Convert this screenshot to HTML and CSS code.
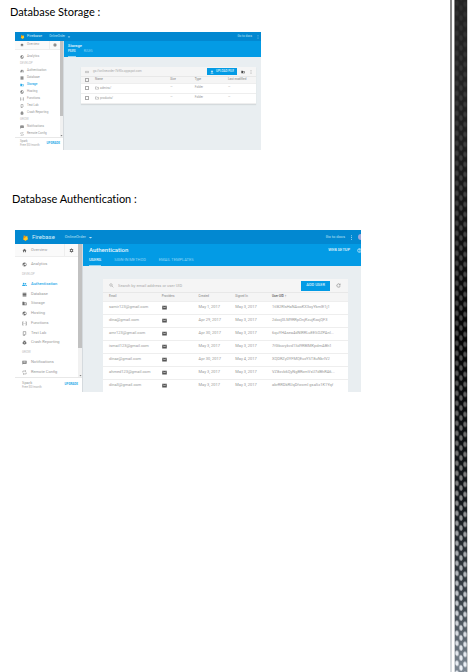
FILE: index.html
```html
<!DOCTYPE html>
<html lang="en">
<head>
<meta charset="utf-8">
<title>Database Storage and Authentication</title>
<link rel="stylesheet" href="styles.css">
</head>
<body>
<svg class="defs" aria-hidden="true">
  <symbol id="fire" viewBox="0 0 24 24"><path fill="#ffa000" d="M4 18 6.500 2.500 11 9l2-4 7 13-8 5z"/><path fill="#f57c00" d="M4 18 11 9l3 4z"/><path fill="#ffca28" d="M4 18 18 6l2 12-8 5z"/></symbol>
  <symbol id="home" viewBox="0 0 24 24"><path d="M10 20v-6h4v6h5v-8h3L12 3 2 12h3v8z"/></symbol>
  <symbol id="gear" viewBox="0 0 24 24"><path fill-rule="evenodd" d="m10 2-.5 3-2 1L5 5 3 9l2 2v2l-2 2 2 4 3-1 2 1v3h4l.5-3 2-1 2.500 1 2-4-2-2v-2l2-2-2-4-3 1-2-1V2zm2 6a4 4 0 1 1 0 8 4 4 0 0 1 0-8z"/></symbol>
  <symbol id="globe" viewBox="0 0 24 24"><path fill-rule="evenodd" d="M12 2a10 10 0 1 0 0 20 10 10 0 0 0 0-20zM4 11l5 4v4c-3-1-5-4-5-8zm13 6-2-1v-3H9v-2h3V8h3V5c4 2 6 8 2 12z"/></symbol>
  <symbol id="people" viewBox="0 0 24 24"><circle cx="8" cy="8" r="4"/><circle cx="17" cy="8" r="3.500"/><path d="M1 19v-3c0-4 14-4 14 0v3zm16 0v-3l-1-3c3 0 7 1 7 3v3z"/></symbol>
  <symbol id="data" viewBox="0 0 24 24"><path d="M3 3h18v5H3zm0 6.500h18v5H3zM3 16h18v5H3z"/></symbol>
  <symbol id="folder" viewBox="0 0 24 24"><path fill-rule="evenodd" d="M2 4h8l2 3h10v13H2zm10 7v6h7v-6z"/></symbol>
  <symbol id="folder-line" viewBox="0 0 24 24"><path fill="none" stroke="currentColor" stroke-width="3" d="M3 5h7l2 3h9v11H3z"/></symbol>
  <symbol id="code" viewBox="0 0 24 24"><path fill="none" stroke="currentColor" stroke-width="2.500" d="M7 4H3v16h4M17 4h4v16h-4"/><circle cx="8" cy="12" r="1.500"/><circle cx="12" cy="12" r="1.500"/><circle cx="16" cy="12" r="1.500"/></symbol>
  <symbol id="phone" viewBox="0 0 24 24"><path fill="none" stroke="currentColor" stroke-width="2.500" d="M6 3h12v13l-4 5H6zM9 17h5"/></symbol>
  <symbol id="bug" viewBox="0 0 24 24"><path fill-rule="evenodd" d="M8 2h2l2 3 2-3h2l-1 5h4v3h2v3h-2v3h2v3h-4l-2 3H9l-2-3H3v-3h2v-3H3v-3h2V7h4zm1 9v2h6v-2zm0 4v2h6v-2z"/></symbol>
  <symbol id="message" viewBox="0 0 24 24"><path fill-rule="evenodd" d="M2 3h20v15H7l-5 4zm4 4v2h12V7zm0 5v2h12v-2z"/></symbol>
  <symbol id="config" viewBox="0 0 24 24"><path fill="none" stroke="currentColor" stroke-width="2" d="M4 12V5h15M16 2l3 3-3 3M20 12v7H5M8 16l-3 3 3 3"/></symbol>
  <symbol id="mail" viewBox="0 0 24 24"><path fill-rule="evenodd" d="M1 3h22v18H1zm3 4v2l8 5 8-5V7l-8 5z"/></symbol>
  <symbol id="search" viewBox="0 0 24 24"><path fill="none" stroke="currentColor" stroke-width="2.500" d="m14 14 7 7"/><circle cx="9.500" cy="9.500" r="6" fill="none" stroke="currentColor" stroke-width="2.500"/></symbol>
  <symbol id="refresh" viewBox="0 0 24 24"><path fill="none" stroke="currentColor" stroke-width="2.500" d="M18 7a8 8 0 1 0 2 6M20 3v6h-6"/></symbol>
  <symbol id="more" viewBox="0 0 24 24"><circle cx="12" cy="4" r="2.500"/><circle cx="12" cy="12" r="2.500"/><circle cx="12" cy="20" r="2.500"/></symbol>
  <symbol id="link" viewBox="0 0 24 24"><path fill="none" stroke="currentColor" stroke-width="3" d="M10 8H3v8h7M14 8h7v8h-7M7 12h10"/></symbol>
  <symbol id="upload" viewBox="0 0 24 24"><path d="M9 16V10H4l8-8 8 8h-5v6zM4 19h16v3H4z"/></symbol>
  <symbol id="help" viewBox="0 0 24 24"><circle cx="12" cy="12" r="9" fill="none" stroke="currentColor" stroke-width="3"/><path fill="none" stroke="currentColor" stroke-width="3" d="M8 10c0-5 8-5 8 0 0 3-4 2-4 5m0 1v3"/></symbol>
  <symbol id="down" viewBox="0 0 24 24"><path d="M4 9h16l-8 8z"/></symbol>
</svg>

<main class="page">
  <h1 class="title">Database Storage :</h1>
  <section class="console console-small" aria-label="Storage console">
    <header class="topbar">
      <svg class="logo"><use href="#fire"/></svg><span class="brand">Firebase</span>
      <button class="project">OnlineOrder <svg><use href="#down"/></svg></button>
      <a class="docs" href="#docs">Go to docs</a>
      <button class="dots" aria-label="More"><svg><use href="#more"/></svg></button>
    </header>
    <div class="body">
      <aside class="sidebar">
        <div class="side-main">
          <div class="overview"><a href="#overview"><svg><use href="#home"/></svg>Overview</a><button aria-label="Settings"><svg><use href="#gear"/></svg></button></div>
          <nav class="nav">
            <a href="#analytics"><svg><use href="#globe"/></svg>Analytics</a>
            <span>DEVELOP</span>
            <a href="#auth"><svg><use href="#people"/></svg>Authentication</a>
            <a href="#database"><svg><use href="#data"/></svg>Database</a>
            <a class="current" href="#storage"><svg><use href="#folder"/></svg>Storage</a>
            <a href="#hosting"><svg><use href="#globe"/></svg>Hosting</a>
            <a href="#functions"><svg><use href="#code"/></svg>Functions</a>
            <a href="#lab"><svg><use href="#phone"/></svg>Test Lab</a>
            <a href="#crash"><svg><use href="#bug"/></svg>Crash Reporting</a>
            <span>GROW</span>
            <a href="#notifications"><svg><use href="#message"/></svg>Notifications</a>
            <a href="#config"><svg><use href="#config"/></svg>Remote Config</a>
          </nav>
          <div class="track"><i></i><svg><use href="#down"/></svg></div>
        </div>
        <footer class="plan"><p>Spark<small>Free $0/month</small></p><button>UPGRADE</button></footer>
      </aside>
      <div class="content">
        <div class="heading">
          <h2>Storage</h2>
          <nav class="tabs"><a class="active" href="#files">FILES</a><a href="#rules">RULES</a></nav>
        </div>
        <div class="card">
          <div class="tools">
            <svg class="tool-icon"><use href="#link"/></svg><span class="path">gs://onlineorder-7b90c.appspot.com</span>
            <button class="primary"><svg><use href="#upload"/></svg>UPLOAD FILE</button>
            <button class="tool dark" aria-label="New folder"><svg><use href="#folder"/></svg></button>
            <button class="tool" aria-label="More"><svg><use href="#more"/></svg></button>
          </div>
          <table class="files">
            <thead><tr><th><input type="checkbox" aria-label="Select all"></th><th>Name</th><th>Size</th><th>Type</th><th>Last modified</th></tr></thead>
            <tbody>
              <tr><td><input type="checkbox" aria-label="Select admins"></td><td><svg><use href="#folder-line"/></svg>admins/</td><td>—</td><td>Folder</td><td>—</td></tr>
              <tr><td><input type="checkbox" aria-label="Select products"></td><td><svg><use href="#folder-line"/></svg>products/</td><td>—</td><td>Folder</td><td>—</td></tr>
            </tbody>
          </table>
        </div>
      </div>
    </div>
  </section>

  <h1 class="title second">Database Authentication :</h1>
  <section class="console console-large" aria-label="Authentication console">
    <header class="topbar">
      <svg class="logo"><use href="#fire"/></svg><span class="brand">Firebase</span>
      <button class="project">OnlineOrder <svg><use href="#down"/></svg></button>
      <a class="docs" href="#docs">Go to docs</a>
      <button class="dots" aria-label="More"><svg><use href="#more"/></svg></button>
      <span class="avatar"></span>
    </header>
    <div class="body">
      <aside class="sidebar">
        <div class="side-main">
          <div class="overview"><a href="#overview"><svg><use href="#home"/></svg>Overview</a><button aria-label="Settings"><svg><use href="#gear"/></svg></button></div>
          <nav class="nav">
            <a href="#analytics"><svg><use href="#globe"/></svg>Analytics</a>
            <span>DEVELOP</span>
            <a class="current" href="#auth"><svg><use href="#people"/></svg>Authentication</a>
            <a href="#database"><svg><use href="#data"/></svg>Database</a>
            <a href="#storage"><svg><use href="#folder"/></svg>Storage</a>
            <a href="#hosting"><svg><use href="#globe"/></svg>Hosting</a>
            <a href="#functions"><svg><use href="#code"/></svg>Functions</a>
            <a href="#lab"><svg><use href="#phone"/></svg>Test Lab</a>
            <a href="#crash"><svg><use href="#bug"/></svg>Crash Reporting</a>
            <span>GROW</span>
            <a href="#notifications"><svg><use href="#message"/></svg>Notifications</a>
            <a href="#config"><svg><use href="#config"/></svg>Remote Config</a>
          </nav>
          <div class="track"><i></i><svg><use href="#down"/></svg></div>
        </div>
        <footer class="plan"><p>Spark<small>Free $0/month</small></p><button>UPGRADE</button></footer>
      </aside>
      <div class="content">
        <div class="heading">
          <div class="heading-row"><h2>Authentication</h2><a class="setup" href="#setup">WEB SETUP</a><svg><use href="#help"/></svg></div>
          <nav class="tabs"><a class="active" href="#users">USERS</a><a href="#method">SIGN-IN METHOD</a><a href="#templates">EMAIL TEMPLATES</a></nav>
        </div>
        <div class="card">
          <div class="tools">
            <svg class="tool-icon"><use href="#search"/></svg>
            <input class="path" type="search" aria-label="Search users" placeholder="Search by email address or user UID">
            <button class="primary">ADD USER</button>
            <button class="tool" aria-label="Refresh"><svg><use href="#refresh"/></svg></button>
          </div>
          <table class="users">
            <thead><tr><th>Email</th><th>Providers</th><th>Created</th><th>Signed In</th><th class="sorted">User UID <b>↑</b></th></tr></thead>
            <tbody>
              <tr><td>samir123@gmail.com</td><td><svg><use href="#mail"/></svg></td><td>May 1, 2017</td><td>May 3, 2017</td><td>1tI82RlsHaNAooKX3oyYkmlE1j1</td></tr>
              <tr><td>dina@gmail.com</td><td><svg><use href="#mail"/></svg></td><td>Apr 29, 2017</td><td>May 3, 2017</td><td>2doxj0LM9RRpOnjKxujKxojQF3</td></tr>
              <tr><td>amr123@gmail.com</td><td><svg><use href="#mail"/></svg></td><td>Apr 30, 2017</td><td>May 3, 2017</td><td>6quYHAsea4dNlRRLuEESOZPAnl...</td></tr>
              <tr><td>ismail123@gmail.com</td><td><svg><use href="#mail"/></svg></td><td>May 3, 2017</td><td>May 3, 2017</td><td>7fGbuvykvd1Sd9RBIMKpdmABh1</td></tr>
              <tr><td>dinaz@gmail.com</td><td><svg><use href="#mail"/></svg></td><td>Apr 30, 2017</td><td>May 4, 2017</td><td>XQDRZy0YFMQEuxYST8uNkrIV2</td></tr>
              <tr><td>ahmed123@gmail.com</td><td><svg><use href="#mail"/></svg></td><td>May 3, 2017</td><td>May 3, 2017</td><td>VZ8xvb6QyNgBRxmVsU7dBhRA6...</td></tr>
              <tr><td>dina3@gmail.com</td><td><svg><use href="#mail"/></svg></td><td>May 3, 2017</td><td>May 3, 2017</td><td>abrRRDkRUqDfwxmI gsaSx1K1Yqf</td></tr>
            </tbody>
          </table>
        </div>
      </div>
    </div>
  </section>
</main>

<div class="border" aria-hidden="true">
  <div class="rail"></div>
  <svg class="weave">
    <defs>
      <pattern id="holes" width="8" height="10" patternUnits="userSpaceOnUse" patternTransform="skewY(8)">
        <g fill="#fff"><ellipse cx="2" cy="3" rx="1.700" ry="2.800"/><ellipse cx="6" cy="7" rx="1.700" ry="2.800"/></g>
      </pattern>
      <linearGradient id="base" x2="0" y2="1"><stop offset="0" stop-color="#252525"/><stop offset=".2" stop-color="#202020"/><stop offset=".5" stop-color="#050505"/><stop offset=".75" stop-color="#15191d"/><stop offset=".9" stop-color="#3e464d"/><stop offset="1" stop-color="#7d8893"/></linearGradient>
      <linearGradient id="light" x2="0" y2="1"><stop offset="0" stop-color="#303030"/><stop offset=".2" stop-color="#3c3c3c"/><stop offset=".5" stop-color="#484848"/><stop offset=".7" stop-color="#777"/><stop offset=".85" stop-color="#b0b4b8"/><stop offset="1" stop-color="#f0f4fa"/></linearGradient>
      <mask id="mesh"><rect width="100%" height="100%" fill="url(#holes)"/></mask>
    </defs>
    <rect width="100%" height="100%" fill="url(#base)"/>
    <rect width="100%" height="100%" fill="url(#light)" mask="url(#mesh)"/>
  </svg>
</div>
</body>
</html>
```

FILE: styles.css
```css
* { box-sizing: border-box; }
body { margin: 0; min-height: 100vh; display: flex; background: #fff; font-family: Roboto, sans-serif; }
svg { fill: currentColor; flex: none; display: block; }
a { color: inherit; text-decoration: none; }
button { padding: 0; border: 0; background: none; color: inherit; font: inherit; display: flex; align-items: center; }
h1, h2, p { margin: 0; }
.defs { position: absolute; width: 0; height: 0; }

.page { flex: 1; min-width: 0; padding: 4px 10px 0; }
.title { color: #000; font: 400 11px/16px "Open Sans", sans-serif; font-family: Lato, sans-serif; font-variant-ligatures: none; }
.second { margin-top: 41px; padding-left: 2px; }

.console {
  margin-left: 5px; display: flex; flex-direction: column; overflow: hidden;
  font-size: var(--text); line-height: 1.2; color: #999;
}
.console-small {
  --text: 3px; --icon: 4px; --bar: 9px; --head: 16px; --side: 49px; --over: 12px; --nav: 84px;
  --plan: 13px; --pad: 5px; --gap: 3px; --scroll: 3px; --row: 10px; --thead: 6px; --tools: 10px; --brand: 4px;
  max-width: 246px; margin-top: 12px;
}
.console-large {
  --text: 4px; --icon: 5px; --bar: 14px; --head: 22px; --side: 68px; --over: 16px; --nav: 117px;
  --plan: 15px; --pad: 7px; --gap: 4px; --scroll: 4px; --row: 13px; --thead: 8px; --tools: 14px; --brand: 6px;
  max-width: 346px; margin-top: 23px;
}
.console svg { width: var(--icon); height: var(--icon); }

.topbar { height: var(--bar); padding-left: var(--pad); display: flex; align-items: center; background: #0288d1; color: #b9e0f3; }
.console .logo { width: calc(var(--brand) + 1px); height: calc(var(--brand) + 1px); }
.brand { margin-left: 3px; font-size: var(--brand); color: #d9effa; }
.project { margin-left: 10px; gap: 2px; }
.console-small .brand { margin-left: 2px; }
.console-small .project { margin-left: 7px; }
.docs { margin-left: auto; }
.dots { margin: 0 1px 0 4px; }
.avatar { width: 3px; height: 6px; margin-left: 3px; border-radius: 3px 0 0 3px; background: #9fa8da; }

.body { display: flex; }
.sidebar { width: var(--side); flex: none; background: #fff; border-right: 1px solid #d5dade; }
.side-main { display: grid; grid-template-columns: 1fr var(--scroll); }
.overview { height: calc(var(--over) - 3px); display: flex; background: #fafafa; border-bottom: 1px solid #eee; }
.overview a, .nav a { padding-left: var(--pad); display: flex; align-items: center; gap: var(--gap); white-space: nowrap; }
.overview a { flex: 1; }
.overview button { padding: 0 var(--gap); border-left: 1px solid #eee; color: #555; }
.sidebar a svg { color: #6c6c6c; }
.nav { grid-row: 2; height: var(--nav); margin-top: 3px; display: grid; grid-auto-rows: 1fr; align-items: center; }
.nav span { padding-left: var(--pad); font-size: 3px; color: #bbb; }
.nav .current, .nav .current svg { color: #29aae9; }
.nav .current { font-weight: 500; }
.track { grid-column: 2; grid-row: 1 / 3; background: #f1f1f1; display: flex; flex-direction: column; justify-content: space-between; align-items: center; }
.track i { width: 100%; height: 78%; background: #c1c1c1; }
.track svg { width: 3px; height: 3px; color: #555; }
.plan { height: var(--plan); padding: 0 var(--gap) 0 var(--pad); border-top: 1px solid #e8e8e8; display: flex; align-items: center; justify-content: space-between; }
.plan small { display: block; font-size: 3px; color: #aaa; }
.plan button { color: #29aae9; font-size: 3px; font-weight: 700; }

.content { flex: 1; min-width: 0; background: #e9eef1; }
.heading { height: var(--head); padding-left: 6px; background: #039be5; color: #e6f5fc; display: flex; flex-direction: column; justify-content: space-between; }
.console-small .heading { padding-left: 4px; }
.heading-row { display: flex; align-items: center; }
.heading h2 { padding-top: 3px; font-size: var(--brand); line-height: 1.1; font-weight: 500; }
.setup { margin-left: auto; margin-right: 7px; padding-top: 3px; font-weight: 500; }
.console .heading-row svg { margin-right: -1px; margin-top: 3px; }
.tabs { display: flex; gap: 13px; color: #93d4f3; }
.tabs a { padding-bottom: 2px; border-bottom: 1px solid transparent; }
.tabs .active { color: #e6f5fc; font-weight: 500; border-color: #93d4f3; }
.console-small .tabs { gap: 8px; }

.card { background: #fff; box-shadow: 0 1px 1px #d5dadd; }
.console-small .card { margin: 10px 5px 0 17px; }
.console-large .card { margin: 13px 13px 0 20px; height: 113px; box-shadow: none; }
.tools { height: var(--tools); padding-left: 6px; display: flex; align-items: center; background: #f5f5f5; border-bottom: 1px solid #e8e8e8; }
.console-small .tools { padding: 0 3px 0 4px; }
.path { flex: 1; min-width: 0; padding: 0; border: 0; margin-left: 4px; background: none; color: #aaa; font: inherit; }
.path::placeholder { color: #aaa; }
.primary { height: 10px; padding: 0 5px; justify-content: center; gap: 2px; background: #039be5; color: #d9effa; font-weight: 500; }
.console-small .primary { height: 7px; padding: 0 3px; }
.tool { margin: 0 7px 0 6px; color: #777; }
.console-small .tool { margin: 0 0 0 4px; }
.tool.dark { color: #444; }

table { width: 100%; border-collapse: collapse; table-layout: fixed; }
th, td { height: var(--row); padding: 0; border-bottom: 1px solid #eee; text-align: left; font-weight: 400; white-space: nowrap; }
th { height: var(--thead); background: #f5f5f5; font-weight: 500; font-size: 3px; }
.sorted { color: #555; }
.sorted b { font-size: 4px; line-height: 3px; }
.users th:nth-child(1) { width: 24%; }
.users th:nth-child(2) { width: 15%; }
.users th:nth-child(3), .users th:nth-child(4) { width: 15%; }
.users th:first-child, .users td:first-child { padding-left: 6px; }
.users svg { color: #555; }
.files th:nth-child(1) { width: 8%; }
.files th:nth-child(2) { width: 43%; }
.files th:nth-child(3) { width: 14%; }
.files th:nth-child(4) { width: 19%; }
.files th:first-child, .files td:first-child { padding-left: 4px; }
.files svg { display: inline-block; margin-right: 1px; vertical-align: middle; }
.files input { appearance: none; display: block; width: 4px; height: 4px; margin: 0; border: 1px solid #aaa; }

.border { flex: none; display: flex; width: 18px; padding-right: 1px; background: linear-gradient(90deg, #fff 90%, #bbb); }
.rail { width: 5px; border: solid #999; border-width: 0 1px 0 2px; border-image: linear-gradient(#888 50%, #aaa 80%, #d8dce0) 1; }
.weave { flex: 1; width: 12px; min-width: 0; height: auto; }
```
